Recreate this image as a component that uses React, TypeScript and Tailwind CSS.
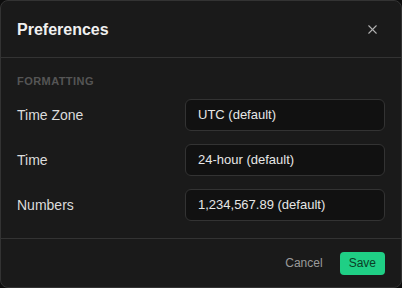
import React from 'react';
import { X } from 'lucide-react';

const rows = [
    { label: 'Time Zone', value: 'UTC (default)' },
    { label: 'Time', value: '24-hour (default)' },
    { label: 'Numbers', value: '1,234,567.89 (default)' },
];

export default function App() {
    return (
        <div className="bg-[#0d0d0d] w-[402px] h-[288px] font-['Liberation_Sans',Arial,sans-serif]">
            <div className="h-full flex flex-col bg-[#1a1a1a] border border-[#333] rounded-[8px] overflow-hidden">
                <div className="h-[57px] shrink-0 flex items-center justify-between pt-[1px] pl-[16px] pr-[21px] border-b border-[#333]">
                    <h1 className="text-[16px] font-bold text-[#f0f0f0]">Preferences</h1>
                    <button className="text-[#b0b0b0]">
                        <X aria-hidden="true" className="w-[15px] h-[15px]" strokeWidth={1.7} />
                    </button>
                </div>

                <div className="flex-1 px-[16px] pt-[15px]">
                    <div className="text-[11px] leading-[16px] font-bold uppercase tracking-[0.04em] text-[#555]">Formatting</div>
                    <div className="mt-[10px] flex flex-col gap-[13px]">
                        {rows.map((r) => (
                            <div key={r.label} className="flex items-center justify-between">
                                <span className="text-[14px] text-[#dcdcdc]">{r.label}</span>
                                <div className="w-[200px] h-[32px] flex items-center px-[12px] bg-[#111] border border-[#333] rounded-[6px] text-[13px] text-[#e6e6e6]">
                                    {r.value}
                                </div>
                            </div>
                        ))}
                    </div>
                </div>

                <div className="h-[49px] shrink-0 flex items-center justify-end gap-[17px] pr-[16px] border-t border-[#333]">
                    <button className="text-[12px] text-[#9a9a9a]">Cancel</button>
                    <button className="h-[23px] px-[9px] rounded-[4px] bg-[#1fcf85] text-[12px] text-[#0b3d26]">Save</button>
                </div>
            </div>
        </div>
    );
}
